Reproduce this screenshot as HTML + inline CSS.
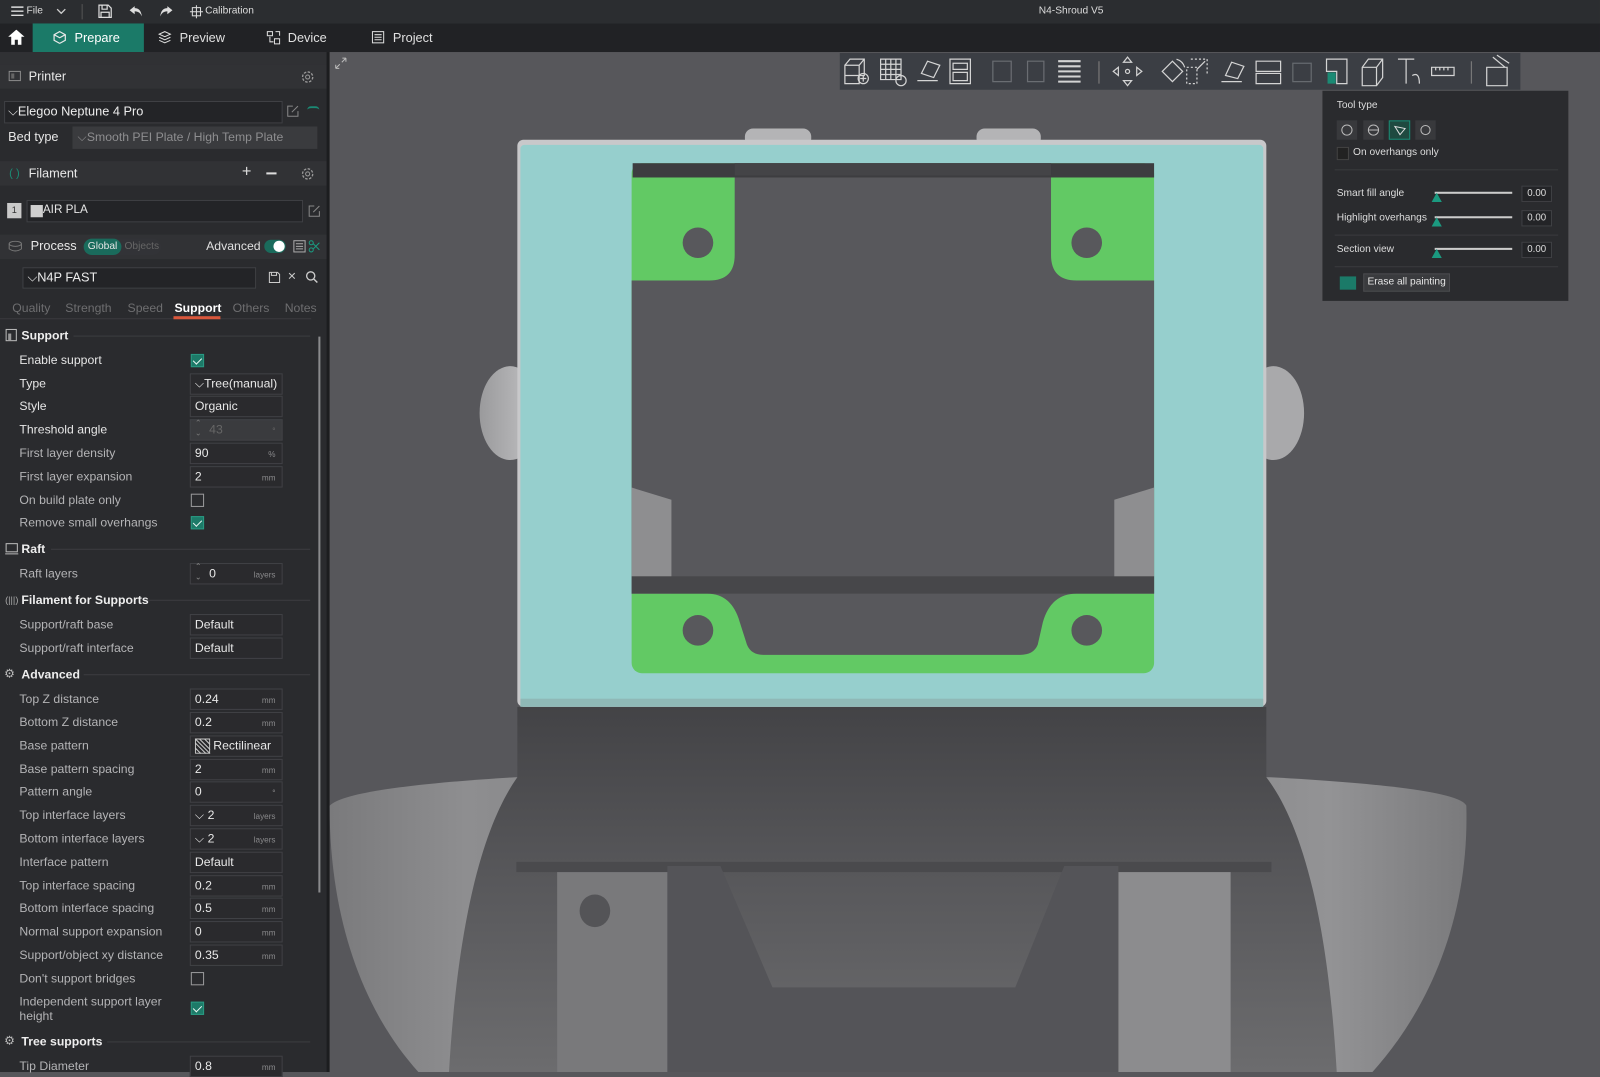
<!DOCTYPE html>
<html><head><meta charset="utf-8">
<style>
*{margin:0;padding:0;box-sizing:border-box}
html,body{width:1600px;height:1072px;overflow:hidden;background:#57575b}
#w{position:absolute;left:0;top:0;width:1568px;height:1051px;transform:scale(1.0204,1.02);transform-origin:0 0;font-family:"Liberation Sans",sans-serif;color:#ddd;font-size:12px}
.a{position:absolute;white-space:nowrap}
.lbl{position:absolute;left:19px;font-size:12px;color:#b4b4b6;line-height:14px}
.lb{color:#e6e6e6}
.box{position:absolute;left:186px;width:91px;height:21px;border:1px solid #404145;background:#2a2a2d;font-size:12px;color:#e8e8e8;padding-left:4px;line-height:19px}
.u{position:absolute;right:6px;top:1px;font-size:8px;color:#8a8a8c}
.cb{position:absolute;left:187px;width:13px;height:13px;background:#1d7a68;border:1px solid #2a9a83}
.cb:after{content:"";position:absolute;left:3px;top:1px;width:4px;height:7px;border:solid #e8f5f2;border-width:0 1.5px 1.5px 0;transform:rotate(45deg)}
.cbe{position:absolute;left:187px;width:13px;height:13px;border:1px solid #9a9a9c}
.sec{position:absolute;left:21px;font-weight:bold;color:#eee;font-size:12px;line-height:14px}
.secl{position:absolute;height:1px;background:#3c3d40}
.hdr{position:absolute;left:0;width:320px;background:#313235;height:24px}
</style></head><body>
<svg style="position:absolute;left:0;top:0" width="1600" height="1072" viewBox="0 0 1568 1051" preserveAspectRatio="none">
<defs>
<linearGradient id="body" x1="0" y1="0" x2="0" y2="1"><stop offset="0" stop-color="#434346"/><stop offset="0.5" stop-color="#59595c"/><stop offset="1" stop-color="#6c6c6e"/></linearGradient>
<linearGradient id="outer" x1="0" y1="0" x2="1" y2="0"><stop offset="0" stop-color="#7a7a7c"/><stop offset="0.12" stop-color="#8e8e90"/><stop offset="0.5" stop-color="#747476"/><stop offset="0.88" stop-color="#939395"/><stop offset="1" stop-color="#7a7a7c"/></linearGradient>
<linearGradient id="ear" x1="0" y1="0" x2="1" y2="0"><stop offset="0" stop-color="#9a9a9c"/><stop offset="1" stop-color="#c4c4c6"/></linearGradient>
</defs>
<rect x="323" y="51" width="1245" height="1000" fill="#57575b"/>
<ellipse cx="500" cy="405" rx="30" ry="46" fill="url(#ear)"/>
<ellipse cx="1248" cy="405" rx="30" ry="46" fill="#a9a9ab"/>
<rect x="730" y="126" width="65" height="18" rx="8" fill="#b4b4b6"/>
<rect x="957" y="126" width="63" height="18" rx="8" fill="#b4b4b6"/>
<path d="M323,790 Q340,772 505,762 L1245,762 Q1430,772 1437,790 C1440,900 1400,990 1345,1051 L410,1051 C355,990 323,900 323,790 Z" fill="url(#outer)"/>
<path d="M507,693 L1241,693 L1241,762 C1270,800 1300,880 1310,1051 L440,1051 C450,880 480,800 507,762 Z" fill="url(#body)"/>
<rect x="546" y="853" width="110" height="198" fill="#79797b"/>
<rect x="1096" y="853" width="110" height="198" fill="#8c8c8e"/>
<rect x="506" y="845" width="740" height="10" fill="#4a4a4d"/>
<path d="M654,1051 L654,849 L706,849 L757,968 L995,968 L1043,849 L1096,849 L1096,1051 Z" fill="#545458"/>
<ellipse cx="583" cy="893" rx="15" ry="16" fill="#545457"/>
<rect x="507" y="137" width="734" height="556" rx="6" fill="#c8c8ca"/>
<rect x="510" y="142" width="728" height="546" rx="4" fill="#96cfcd"/>
<rect x="619" y="160" width="512" height="500" rx="10" fill="#62c964"/>
<path d="M720,160 L1030,160 L1030,250 Q1030,275 1055,275 L1131,275 L1131,582 L1055,582 Q1030,582 1022,610 L1017,632 Q1013,642 1000,642 L748,642 Q736,642 732,632 L725,610 Q717,582 693,582 L619,582 L619,275 L695,275 Q720,275 720,250 Z" fill="#58585c"/>
<rect x="620" y="160" width="511" height="14" fill="#3d3d40"/>
<rect x="720" y="160" width="310" height="12" fill="#444447"/>
<path d="M619,478 L658,490 L658,582 L619,582 Z" fill="#8e8e90"/>
<path d="M1131,478 L1092,490 L1092,582 L1131,582 Z" fill="#8e8e90"/>
<rect x="619" y="565" width="512" height="17" fill="#47474a"/>
<circle cx="684" cy="238" r="15" fill="#58585c"/>
<circle cx="1065" cy="238" r="15" fill="#58585c"/>
<circle cx="684" cy="618" r="15" fill="#58585c"/>
<circle cx="1065" cy="618" r="15" fill="#58585c"/>
<rect x="510" y="685" width="728" height="8" fill="#8fb9b7"/>
</svg>

<div id="w">
<div class="a" style="left:0;top:0;width:1568px;height:23px;background:#2b2d30"></div>
<svg class="a" style="left:10px;top:5px" width="14" height="12"><path d="M1,2H13M1,6H13M1,10H13" stroke="#ddd" stroke-width="1.4"/></svg>
<div class="a" style="left:26px;top:5px;font-size:10px;color:#ddd">File</div>
<svg class="a" style="left:55px;top:8px" width="10" height="6"><path d="M1,1L5,5L9,1" stroke="#ccc" fill="none" stroke-width="1.3"/></svg>
<div class="a" style="left:80px;top:4px;width:1px;height:15px;background:#555"></div>
<svg class="a" style="left:96px;top:4px" width="14" height="14"><path d="M1,1H10L13,4V13H1Z M4,1V5H9V1 M3,13V8H11V13" stroke="#ddd" fill="none" stroke-width="1.2"/></svg>
<svg class="a" style="left:126px;top:5px" width="14" height="12"><path d="M6,1L1,5L6,9V6Q11,6 13,11Q12,3 6,3Z" fill="#ddd"/></svg>
<svg class="a" style="left:156px;top:5px" width="14" height="12"><path d="M8,1L13,5L8,9V6Q3,6 1,11Q2,3 8,3Z" fill="#ddd"/></svg>
<svg class="a" style="left:186px;top:5px" width="13" height="13"><rect x="2.5" y="2.5" width="8" height="8" stroke="#ddd" fill="none"/><path d="M6.5,0V13M0,6.5H13" stroke="#ddd"/></svg>
<div class="a" style="left:201px;top:5px;font-size:10px;color:#ddd">Calibration</div>
<div class="a" style="left:1018px;top:5px;font-size:10px;color:#ddd">N4-Shroud V5</div>
<div class="a" style="left:0;top:23px;width:1568px;height:28px;background:#212225"></div>
<svg class="a" style="left:8px;top:29px" width="16" height="15"><path d="M8,0L16,7H13V15H9.5V10H6.5V15H3V7H0Z" fill="#fff"/></svg>
<div class="a" style="left:32px;top:23px;width:109px;height:28px;background:#1b7a68"></div>
<svg class="a" style="left:52px;top:30px" width="13" height="13"><path d="M6.5,1L12,4V9.5L6.5,12.5L1,9.5V4Z M1,4L6.5,7L12,4" stroke="#e8e8e8" fill="none" stroke-width="1.2"/></svg>
<div class="a" style="left:73px;top:30px;font-size:12.5px;color:#fff">Prepare</div>
<svg class="a" style="left:155px;top:30px" width="13" height="13"><path d="M6.5,1L12,3.5L6.5,6L1,3.5Z M1,6.5L6.5,9L12,6.5 M1,9.5L6.5,12L12,9.5" stroke="#ddd" fill="none"/></svg>
<div class="a" style="left:176px;top:30px;font-size:12.5px;color:#e0e0e0">Preview</div>
<svg class="a" style="left:261px;top:30px" width="14" height="14"><rect x="1" y="1" width="5" height="4" stroke="#ddd" fill="none"/><rect x="8" y="8" width="5" height="5" stroke="#ddd" fill="none"/><path d="M3.5,6V11H7 M9,1H13V5" stroke="#ddd" fill="none"/></svg>
<div class="a" style="left:282px;top:30px;font-size:12.5px;color:#e0e0e0">Device</div>
<svg class="a" style="left:364px;top:30px" width="13" height="13"><rect x="1" y="1" width="11" height="11" stroke="#ddd" fill="none"/><path d="M3,4H10M3,6.5H10M3,9H10" stroke="#ddd"/></svg>
<div class="a" style="left:385px;top:30px;font-size:12.5px;color:#e0e0e0">Project</div>

<div class="a" style="left:0;top:51px;width:320px;height:1000px;background:#2a2b2e"></div>
<div class="a" style="left:320px;top:51px;width:3px;height:1000px;background:#1c1d1f"></div>
<div class="a" style="left:0;top:51px;width:320px;height:12px;background:#303134"></div>
<svg class="a" style="left:327px;top:55px" width="14" height="14"><path d="M2,12L6,8M2,12V8.5M2,12H5.5 M12,2L8,6M12,2V5.5M12,2H8.5" stroke="#bbb" fill="none"/></svg>

<div class="hdr" style="top:63px"></div>
<svg class="a" style="left:8px;top:69px" width="13" height="12"><rect x="1" y="1" width="11" height="9" stroke="#8a8a8a" fill="none"/><rect x="3" y="3" width="3" height="5" fill="#666"/></svg>
<div class="a" style="left:28px;top:68px;font-size:12.5px;color:#e8e8e8">Printer</div>
<svg class="a" style="left:295px;top:69px" width="13" height="13"><circle cx="6.5" cy="6.5" r="5" stroke="#999" fill="none" stroke-width="1.3" stroke-dasharray="2.5 1.4"/><circle cx="6.5" cy="6.5" r="2" stroke="#999" fill="none"/></svg>
<div class="a" style="left:4px;top:99px;width:273px;height:22px;border:1px solid #3f4044;background:#232427"></div>
<div class="a" style="left:8px;top:102px;font-size:12.5px;color:#ececec">⌵Elegoo Neptune 4 Pro</div>
<svg class="a" style="left:281px;top:103px" width="12" height="12"><path d="M6,1H1V11H11V6 M5,7L11,1" stroke="#888" fill="none"/></svg>
<div class="a" style="left:301px;top:104px;width:12px;height:4px;border-top:2px solid #1b8a74;border-radius:8px 8px 0 0"></div>
<div class="a" style="left:8px;top:127px;font-size:12.5px;color:#e6e6e6">Bed type</div>
<div class="a" style="left:71px;top:124px;width:240px;height:22px;background:#3a3b3e"></div>
<div class="a" style="left:76px;top:127px;font-size:12px;color:#8e8e90">⌵Smooth PEI Plate / High Temp Plate</div>

<div class="hdr" style="top:158px"></div>
<div class="a" style="left:9px;top:164px;font-size:11px;color:#1b8a74">( )</div>
<div class="a" style="left:28px;top:163px;font-size:12.5px;color:#e8e8e8">Filament</div>
<div class="a" style="left:237px;top:160px;font-size:16px;color:#ddd">+</div>
<div class="a" style="left:261px;top:169px;width:10px;height:1.5px;background:#ddd"></div>
<svg class="a" style="left:295px;top:164px" width="13" height="13"><circle cx="6.5" cy="6.5" r="5" stroke="#999" fill="none" stroke-width="1.3" stroke-dasharray="2.5 1.4"/><circle cx="6.5" cy="6.5" r="2" stroke="#999" fill="none"/></svg>
<div class="a" style="left:7px;top:199px;width:14px;height:15px;background:#c9c9c9;color:#333;font-size:9px;text-align:center;line-height:15px">1</div>
<div class="a" style="left:26px;top:196px;width:271px;height:22px;border:1px solid #3f4044;background:#232427"></div>
<div class="a" style="left:30px;top:201px;width:12px;height:12px;background:#cfcfcf"></div>
<div class="a" style="left:42px;top:200px;font-size:11.5px;color:#e6e6e6">AIR PLA</div>
<svg class="a" style="left:302px;top:201px" width="12" height="12"><path d="M6,1H1V11H11V6 M5,7L11,1" stroke="#888" fill="none"/></svg>

<div class="hdr" style="top:230px"></div>
<svg class="a" style="left:8px;top:236px" width="14" height="12"><ellipse cx="7" cy="3" rx="6" ry="2.5" stroke="#777" fill="none"/><path d="M1,3V8Q7,12 13,8V3" stroke="#777" fill="none"/></svg>
<div class="a" style="left:30px;top:234px;font-size:12.5px;color:#e8e8e8">Process</div>
<div class="a" style="left:82px;top:234px;width:76px;height:16px;background:#323337;border-radius:8px"></div>
<div class="a" style="left:82px;top:234px;width:37px;height:16px;background:#1a6b5c;border-radius:8px;font-size:10px;color:#e6e6e6;text-align:center;line-height:16px">Global</div>
<div class="a" style="left:122px;top:236px;font-size:10px;color:#666">Objects</div>
<div class="a" style="left:202px;top:234px;font-size:12px;color:#e0e0e0">Advanced</div>
<div class="a" style="left:259px;top:235px;width:21px;height:13px;background:#1a6b5c;border-radius:7px"></div>
<div class="a" style="left:268px;top:236px;width:11px;height:11px;background:#fff;border-radius:50%"></div>
<svg class="a" style="left:287px;top:235px" width="13" height="13"><rect x="1" y="1" width="11" height="11" stroke="#aaa" fill="none"/><path d="M3,4H10M3,6.5H10M3,9H10" stroke="#aaa"/></svg>
<svg class="a" style="left:302px;top:235px" width="12" height="13"><circle cx="3" cy="3" r="2" stroke="#1b9a80" fill="none"/><circle cx="3" cy="10" r="2" stroke="#1b9a80" fill="none"/><path d="M5,4L11,10M5,9L11,3" stroke="#1b9a80"/></svg>
<div class="a" style="left:22px;top:262px;width:229px;height:21px;border:1px solid #3f4044;background:#232427"></div>
<div class="a" style="left:27px;top:265px;font-size:12.5px;color:#ececec">⌵N4P FAST</div>
<svg class="a" style="left:263px;top:266px" width="12" height="12"><path d="M1,1H9L11,3V11H1Z M3,1V4H8V1" stroke="#ccc" fill="none"/></svg>
<div class="a" style="left:282px;top:262px;font-size:14px;color:#ccc">×</div>
<svg class="a" style="left:299px;top:265px" width="13" height="13"><circle cx="5.5" cy="5.5" r="4" stroke="#ccc" fill="none" stroke-width="1.3"/><path d="M8.5,8.5L12,12" stroke="#ccc" stroke-width="1.4"/></svg>

<div class="a" style="left:12px;top:295px;font-size:12px;color:#6e6e70">Quality</div>
<div class="a" style="left:64px;top:295px;font-size:12px;color:#6e6e70">Strength</div>
<div class="a" style="left:125px;top:295px;font-size:12px;color:#6e6e70">Speed</div>
<div class="a" style="left:171px;top:295px;font-size:12px;color:#fff;font-weight:bold">Support</div>
<div class="a" style="left:228px;top:295px;font-size:12px;color:#6e6e70">Others</div>
<div class="a" style="left:279px;top:295px;font-size:12px;color:#6e6e70">Notes</div>
<div class="a" style="left:0;top:312px;width:305px;height:1px;background:#3a3b3e"></div>
<div class="a" style="left:170px;top:310px;width:46px;height:3px;background:#d9573c"></div>
<div class="a" style="left:312px;top:330px;width:2px;height:545px;background:#8a8a8c"></div>

<svg class="a" style="left:5px;top:322px" width="12" height="13"><rect x="1" y="1" width="10" height="11" stroke="#bbb" fill="none"/><rect x="3" y="5" width="3" height="7" fill="#999"/></svg>
<div class="sec" style="top:322px">Support</div><div class="secl" style="left:72px;top:329px;width:232px"></div>
<div class="lbl lb" style="top:346px">Enable support</div><div class="cb" style="top:347px"></div>
<div class="lbl lb" style="top:369px">Type</div><div class="box" style="top:366px">⌵Tree(manual)</div>
<div class="lbl lb" style="top:391px">Style</div><div class="box" style="top:388px">Organic</div>
<div class="lbl lb" style="top:414px">Threshold angle</div><div class="box" style="top:411px;background:#3a3b3e;color:#666;padding-left:18px">43<span class="u" style="color:#666">°</span><span style="position:absolute;left:4px;top:-2px;font-size:8px;color:#777;line-height:10px">⌃<br>⌄</span></div>
<div class="lbl" style="top:437px">First layer density</div><div class="box" style="top:434px">90<span class="u">%</span></div>
<div class="lbl" style="top:460px">First layer expansion</div><div class="box" style="top:457px">2<span class="u">mm</span></div>
<div class="lbl" style="top:483px">On build plate only</div><div class="cbe" style="top:484px"></div>
<div class="lbl" style="top:505px">Remove small overhangs</div><div class="cb" style="top:506px"></div>

<svg class="a" style="left:5px;top:532px" width="13" height="12"><rect x="1" y="1" width="11" height="8" stroke="#bbb" fill="none"/><path d="M0,11H13" stroke="#bbb"/></svg>
<div class="sec" style="top:531px">Raft</div><div class="secl" style="left:50px;top:538px;width:254px"></div>
<div class="lbl" style="top:555px">Raft layers</div><div class="box" style="top:552px;padding-left:18px">0<span class="u">layers</span><span style="position:absolute;left:4px;top:-2px;font-size:8px;color:#888;line-height:10px">⌃<br>⌄</span></div>

<div class="a" style="left:5px;top:583px;font-size:9px;color:#aaa">(|||)</div>
<div class="sec" style="top:581px">Filament for Supports</div><div class="secl" style="left:145px;top:588px;width:159px"></div>
<div class="lbl" style="top:605px">Support/raft base</div><div class="box" style="top:602px">Default</div>
<div class="lbl" style="top:628px">Support/raft interface</div><div class="box" style="top:625px">Default</div>

<div class="a" style="left:4px;top:653px;font-size:12px;color:#bbb">⚙</div>
<div class="sec" style="top:654px">Advanced</div><div class="secl" style="left:82px;top:661px;width:222px"></div>
<div class="lbl" style="top:678px">Top Z distance</div><div class="box" style="top:675px">0.24<span class="u">mm</span></div>
<div class="lbl" style="top:701px">Bottom Z distance</div><div class="box" style="top:698px">0.2<span class="u">mm</span></div>
<div class="lbl" style="top:724px">Base pattern</div><div class="box" style="top:721px;padding-left:22px">Rectilinear<svg style="position:absolute;left:4px;top:2px" width="15" height="15"><rect x="0.5" y="0.5" width="14" height="14" stroke="#ccc" fill="none"/><path d="M0,4L11,15M0,9L6,15M4,0L15,11M9,0L15,6M0,0L15,15" stroke="#ccc"/></svg></div>
<div class="lbl" style="top:747px">Base pattern spacing</div><div class="box" style="top:744px">2<span class="u">mm</span></div>
<div class="lbl" style="top:769px">Pattern angle</div><div class="box" style="top:766px">0<span class="u">°</span></div>
<div class="lbl" style="top:792px">Top interface layers</div><div class="box" style="top:789px">⌵ 2<span class="u">layers</span></div>
<div class="lbl" style="top:815px">Bottom interface layers</div><div class="box" style="top:812px">⌵ 2<span class="u">layers</span></div>
<div class="lbl" style="top:838px">Interface pattern</div><div class="box" style="top:835px">Default</div>
<div class="lbl" style="top:861px">Top interface spacing</div><div class="box" style="top:858px">0.2<span class="u">mm</span></div>
<div class="lbl" style="top:883px">Bottom interface spacing</div><div class="box" style="top:880px">0.5<span class="u">mm</span></div>
<div class="lbl" style="top:906px">Normal support expansion</div><div class="box" style="top:903px">0<span class="u">mm</span></div>
<div class="lbl" style="top:929px">Support/object xy distance</div><div class="box" style="top:926px">0.35<span class="u">mm</span></div>
<div class="lbl" style="top:952px">Don't support bridges</div><div class="cbe" style="top:953px"></div>
<div class="lbl" style="top:975px">Independent support layer<br>height</div><div class="cb" style="top:982px"></div>
<div class="a" style="left:4px;top:1013px;font-size:12px;color:#bbb">⚙</div>
<div class="sec" style="top:1014px">Tree supports</div><div class="secl" style="left:105px;top:1021px;width:199px"></div>
<div class="lbl" style="top:1038px">Tip Diameter</div><div class="box" style="top:1035px">0.8<span class="u">mm</span></div>

<div class="a" style="left:823px;top:52px;width:667px;height:36px;background:#3b3e44"></div>
<svg class="a" style="left:823px;top:52px" width="667" height="36" fill="none" stroke="#d4d4d4" stroke-width="1.2">
<path d="M5,12L10,6H24V22H5Z M5,12H19V30H5Z M19,12L24,6"/><circle cx="23" cy="25" r="5"/><path d="M23,22V28M20,25H26"/>
<path d="M40,6H60V26H40Z M45,6V26M50,6V26M55,6V26M40,11H60M40,16H60M40,21H60"/><circle cx="60" cy="27" r="5"/>
<path d="M76,27H96 M80,20L86,8L98,12L92,24Z"/><path d="M108,6H128V30H108Z M111,10H125V16H111Z M111,19H125V27H111Z"/>
<g stroke="#6a6d72"><path d="M150,8H168V28H150Z M184,8H200V28H184Z"/></g>
<path d="M214,8H236M214,13H236M214,18H236M214,23H236M214,28H236" stroke-width="2"/>
<path d="M254,8V30" stroke="#777"/>
<path d="M282,4L278,9H286Z M282,32L278,27H286Z M268,18L273,14V22Z M296,18L291,14V22Z"/><circle cx="282" cy="18" r="2"/>
<path d="M316,18L326,8L336,18L326,28Z M330,6A12,12 0 0 1 338,14"/>
<path d="M340,14H350V30H340Z M344,6H360V20" stroke-dasharray="2 2"/><path d="M350,16L358,8"/>
<path d="M374,28H394 M378,22L384,9L396,13L390,25Z"/>
<path d="M408,8H432V18H408Z M408,20H432V30H408Z"/>
<g stroke="#666a6f"><path d="M444,10H462V28H444Z"/></g>
<path d="M477,6H497V30H487V18H477Z"/><rect x="478" y="19" width="8" height="11" fill="#1b8a74" stroke="none"/>
<path d="M512,14L518,6H532V24L526,32H512Z M512,14H526V32 M526,14L532,6"/>
<path d="M547,6H563M555,6V30 M561,22Q568,18 568,30"/>
<path d="M580,14H602V22H580Z M584,14V17M588,14V17M592,14V17M596,14V17"/>
<path d="M619,8V30" stroke="#777"/>
<path d="M634,14H654V32H634Z M640,4L652,14M644,2L656,10"/>
</svg>

<div class="a" style="left:1296px;top:89px;width:241px;height:206px;background:#2a2b2e"></div>
<div class="a" style="left:1310px;top:98px;font-size:10px;color:#ddd">Tool type</div>
<div class="a" style="left:1310px;top:118px;width:20px;height:19px;background:#38393c"></div>
<div class="a" style="left:1336px;top:118px;width:20px;height:19px;background:#38393c"></div>
<div class="a" style="left:1361px;top:118px;width:21px;height:19px;background:#1f4a40;border:1px solid #1b8a74"></div>
<div class="a" style="left:1387px;top:118px;width:20px;height:19px;background:#38393c"></div>
<svg class="a" style="left:1310px;top:118px" width="100" height="19" fill="none" stroke="#bbb"><circle cx="10" cy="9.5" r="5"/><circle cx="36" cy="9.5" r="5"/><path d="M31,9.5H41"/><path d="M57,6L62,14L67,8Z" stroke="#ddd"/><circle cx="87" cy="9.5" r="4.5"/></svg>
<div class="a" style="left:1310px;top:144px;width:12px;height:13px;border:1px solid #444;background:#222"></div>
<div class="a" style="left:1326px;top:144px;font-size:10px;color:#ddd">On overhangs only</div>
<div class="a" style="left:1308px;top:166px;width:219px;height:1px;background:#3a3b3e"></div>
<div class="a" style="left:1310px;top:184px;font-size:10px;color:#ddd">Smart fill angle</div>
<div class="a" style="left:1310px;top:208px;font-size:10px;color:#ddd">Highlight overhangs</div>
<div class="a" style="left:1308px;top:230px;width:219px;height:1px;background:#3a3b3e"></div>
<div class="a" style="left:1310px;top:239px;font-size:10px;color:#ddd">Section view</div>
<div class="a" style="left:1308px;top:261px;width:219px;height:1px;background:#3a3b3e"></div>
<div class="a" style="left:1406px;top:188px;width:76px;height:2px;background:#ccc"></div>
<div class="a" style="left:1406px;top:212px;width:76px;height:2px;background:#ccc"></div>
<div class="a" style="left:1406px;top:243px;width:76px;height:2px;background:#ccc"></div>
<svg class="a" style="left:1403px;top:187px" width="12" height="66" fill="#1b9a80"><path d="M5,2L10,11H0Z M5,26L10,35H0Z M5,57L10,66H0Z"/></svg>
<div class="a" style="left:1491px;top:182px;width:30px;height:16px;border:1px solid #3f4044;background:#232427;font-size:9.5px;color:#ddd;text-align:center;line-height:14px">0.00</div>
<div class="a" style="left:1491px;top:206px;width:30px;height:16px;border:1px solid #3f4044;background:#232427;font-size:9.5px;color:#ddd;text-align:center;line-height:14px">0.00</div>
<div class="a" style="left:1491px;top:237px;width:30px;height:16px;border:1px solid #3f4044;background:#232427;font-size:9.5px;color:#ddd;text-align:center;line-height:14px">0.00</div>
<div class="a" style="left:1313px;top:271px;width:16px;height:13px;background:#1b7a68"></div>
<div class="a" style="left:1336px;top:268px;width:85px;height:18px;background:#3a3b3e;border:1px solid #4a4b4e;font-size:10px;color:#e6e6e6;text-align:center;line-height:16px">Erase all painting</div>
</div>
</body></html>
